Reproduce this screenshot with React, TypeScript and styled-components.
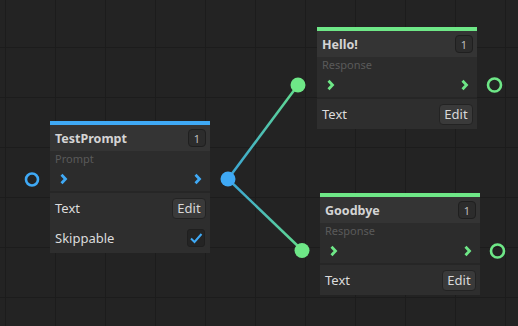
import React from "react";
import styled, { createGlobalStyle } from "styled-components";

const BLUE = "#3fa9f5";
const GREEN = "#6ee787";

const GlobalStyle = createGlobalStyle`
  html, body {
    margin: 0;
    padding: 0;
    background: #232323;
  }
  body {
    font-family: "Noto Sans", "Open Sans", sans-serif;
  }
`;

type NodeData = {
  id: string;
  title: string;
  label: string;
  color: string;
  x: number;
  y: number;
  skippable?: boolean;
};

const nodes: NodeData[] = [
  { id: "prompt", title: "TestPrompt", label: "Prompt", color: BLUE, x: 50, y: 121, skippable: true },
  { id: "hello", title: "Hello!", label: "Response", color: GREEN, x: 317, y: 27 },
  { id: "bye", title: "Goodbye", label: "Response", color: GREEN, x: 320, y: 193 },
];

const Chevron = ({ color }: { color: string }) => (
  <svg width="9" height="12" viewBox="0 0 9 12">
    <polyline points="2.5,1.8 6.5,6 2.5,10.2" fill="none" stroke={color} strokeWidth="2.8" />
  </svg>
);

const Node = ({ node }: { node: NodeData }) => (
  <NodeBox style={{ left: node.x, top: node.y }}>
    <TopBar $color={node.color} />
    <Header>
      <Title>{node.title}</Title>
      <Badge>1</Badge>
    </Header>
    <Label>{node.label}</Label>
    <PortRow>
      <Chevron color={node.color} />
      <Chevron color={node.color} />
    </PortRow>
    <Divider />
    <FieldRow>
      <span>Text</span>
      <EditButton>Edit</EditButton>
    </FieldRow>
    {node.skippable && (
      <FieldRow>
        <span>Skippable</span>
        <Check>
          <svg width="14" height="12" viewBox="0 0 14 12">
            <polyline points="2,6.5 5.5,10 12.5,2" fill="none" stroke={BLUE} strokeWidth="2" />
          </svg>
        </Check>
      </FieldRow>
    )}
  </NodeBox>
);

const App = () => {
  return (
    <Canvas>
      <GlobalStyle />
      <Wires width="518" height="326">
        <defs>
          <linearGradient id="w1" gradientUnits="userSpaceOnUse" x1="228" y1="179" x2="298" y2="85">
            <stop offset="0" stopColor="#3aa3d8" />
            <stop offset="1" stopColor="#62dc8c" />
          </linearGradient>
          <linearGradient id="w2" gradientUnits="userSpaceOnUse" x1="228" y1="179" x2="302" y2="250">
            <stop offset="0" stopColor="#3aa3d8" />
            <stop offset="1" stopColor="#62dc8c" />
          </linearGradient>
        </defs>
        <line x1="228" y1="179" x2="298" y2="85" stroke="url(#w1)" strokeWidth="2.5" />
        <line x1="228" y1="179" x2="302" y2="250" stroke="url(#w2)" strokeWidth="2.5" />
        <circle cx="32" cy="179.5" r="6" fill="none" stroke={BLUE} strokeWidth="2.6" />
        <circle cx="228" cy="179" r="7.5" fill={BLUE} />
        <circle cx="298" cy="85" r="7.5" fill={GREEN} />
        <circle cx="302" cy="250.5" r="7.5" fill={GREEN} />
        <circle cx="494.5" cy="85" r="6.5" fill="none" stroke={GREEN} strokeWidth="2.6" />
        <circle cx="497.5" cy="251" r="6.5" fill="none" stroke={GREEN} strokeWidth="2.6" />
      </Wires>
      {nodes.map((n) => (
        <Node key={n.id} node={n} />
      ))}
    </Canvas>
  );
};

export default App;

const Canvas = styled.div`
  position: relative;
  width: 518px;
  height: 326px;
  overflow: hidden;
  background-color: #232323;
  background-image: linear-gradient(to right, #1c1c1c 1px, transparent 1px),
    linear-gradient(to bottom, #1c1c1c 1px, transparent 1px);
  background-size: 50px 50px;
  background-position: 5px 47px;
`;

const Wires = styled.svg`
  position: absolute;
  left: 0;
  top: 0;
  z-index: 2;
`;

const NodeBox = styled.div`
  position: absolute;
  width: 160px;
  background: #2c2c2c;
  display: flex;
  flex-direction: column;
  color: #dcdcdc;
  font-size: 13px;
  z-index: 1;
`;

const TopBar = styled.div<{ $color: string }>`
  height: 4px;
  background: ${(p) => p.$color};
`;

const Header = styled.div`
  height: 26px;
  background: #343434;
  display: flex;
  align-items: center;
  justify-content: space-between;
  padding: 0 4px 0 5px;
`;

const Title = styled.span`
  font-weight: 700;
  font-size: 12.5px;
  color: #d4d4d4;
`;

const Badge = styled.span`
  width: 16px;
  height: 16px;
  border: 1px solid #1f1f1f;
  border-radius: 4px;
  background: #2c2c2c;
  color: #bdbdbd;
  font-size: 11px;
  display: flex;
  align-items: center;
  justify-content: center;
`;

const Label = styled.div`
  height: 16px;
  line-height: 16px;
  padding-left: 5px;
  font-size: 11px;
  color: #5a5a5a;
`;

const PortRow = styled.div`
  height: 24px;
  display: flex;
  align-items: center;
  justify-content: space-between;
  padding: 0 8px 0 9px;
`;

const Divider = styled.div`
  height: 2px;
  background: #262626;
`;

const FieldRow = styled.div`
  height: 30px;
  display: flex;
  align-items: center;
  justify-content: space-between;
  padding: 0 4px 0 5px;
  background: #2e2e2e;
`;

const EditButton = styled.button`
  width: 34px;
  height: 21px;
  padding: 0;
  border: 1px solid #232323;
  border-radius: 4px;
  background: #3a3a3a;
  color: #d8d8d8;
  font-family: "Noto Sans", sans-serif;
  font-size: 13px;
`;

const Check = styled.div`
  width: 16px;
  height: 16px;
  margin-right: 1px;
  border: 1px solid #1f1f1f;
  border-radius: 3px;
  background: #242424;
  display: flex;
  align-items: center;
  justify-content: center;
`;
